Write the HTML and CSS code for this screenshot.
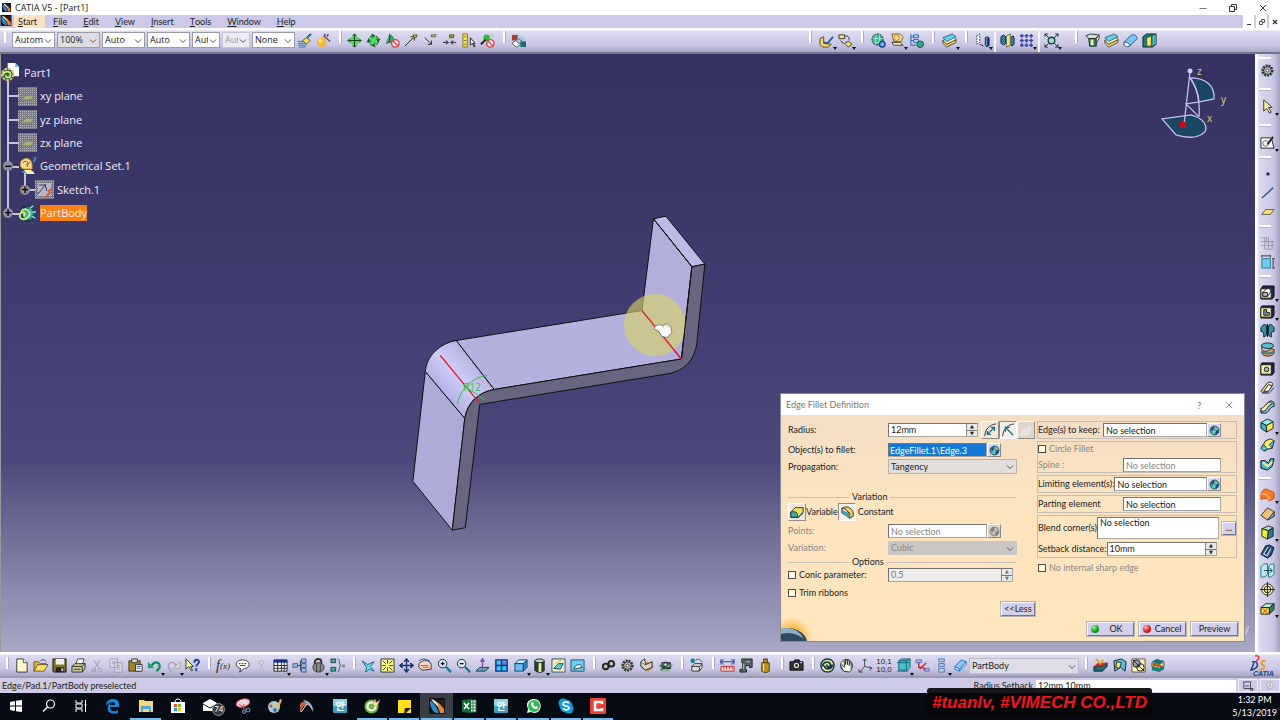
FILE: index.html
```html
<!DOCTYPE html>
<html lang="en">
<head>
<meta charset="utf-8">
<title>CATIA V5 - [Part1]</title>
<link rel="stylesheet" href="styles.css">
</head>
<body>
<svg class="defs" aria-hidden="true">
<symbol id="chev" viewBox="0 0 8 8"><path d="M1 2.5l3 3 3-3" fill="none" stroke="#555"/></symbol>
<symbol id="catia" viewBox="0 0 16 16"><rect width="16" height="16" fill="#12121a"/><path d="M1 3c2 0 6 3 9 12H7C3 13 1 9 1 3z" fill="#2d87c4"/><path d="M2 1c4 1 9 4 13 10v4h-4C9 8 6 4 2 1z" fill="#e98435"/><path d="M2 1c4 1 6 4 8 8-3-2-6-5-8-8z" fill="#e8f6ff"/><path d="M9 2h6v8c-1-3-3-6-6-8z" fill="#33231c"/></symbol>
<symbol id="gear" viewBox="0 0 16 16"><path d="M1 5l9-3 5 8-8 5-6-2z" fill="#9fd0b9"/><circle cx="8" cy="8" r="5" fill="none" stroke="#333" stroke-width="3" stroke-dasharray="2 1"/><circle cx="8" cy="8" r="4" fill="#ccc" stroke="#333"/><circle cx="8" cy="8" r="1.7" fill="#fff" stroke="#333"/></symbol>
<symbol id="globe" viewBox="0 0 16 16"><circle cx="8" cy="8" r="6.5" fill="#3ab7a7" stroke="#124" /><path d="M3 5l4-3 3 2-3 4-3 1zM9 9l4-2 1 4-4 3z" fill="#1b47a8"/><path d="M6 10l3-7 3 4M5 13l5-4" stroke="#d9ef82" fill="none"/></symbol>
<symbol id="slab" viewBox="0 0 16 16"><path d="M1 11l4 4 10-5v-3L5 12 1 8z" fill="#f8dc61" stroke="#222" stroke-width=".8"/><path d="M1 8l4 4 10-5-4-4z" fill="#fff3b5" stroke="#333" stroke-width=".8"/><path d="M1 5l4 4 10-5-4-3z" fill="#5ed6ee" stroke="#246" stroke-width=".8"/></symbol>
<symbol id="bluebox" viewBox="0 0 16 16"><path d="M2 6l4-4h9l-4 4z" fill="#bdeaff" stroke="#147"/><path d="M2 6h9v8H2z" fill="#68bdf0" stroke="#147"/><path d="M11 6l4-4v8l-4 4z" fill="#2b86cc" stroke="#147"/></symbol>
<symbol id="erase" viewBox="0 0 16 16"><path d="M2 9L9 2l5 2-7 8z" fill="#8cc7f5" stroke="#236bc0"/><path d="M2 9v3l5 2v-2zM7 14l7-7V4l-7 8z" fill="#d9ecff" stroke="#236bc0"/></symbol>
<symbol id="no" viewBox="0 0 16 16"><circle cx="11" cy="11" r="4" fill="#fff" fill-opacity=".7" stroke="#e2383c" stroke-width="1.4"/><path d="M8 8l6 6" stroke="#e2383c" stroke-width="1.4"/></symbol>
<symbol id="plane" viewBox="0 0 19 19"><rect width="19" height="19" fill="#7c7b89"/><path d="M0 1.500h19M0 3.500h19M0 5.500h19M0 7.500h19M0 9.500h19M0 11.500h19M0 13.500h19M0 15.500h19M0 17.500h19" stroke="#aeaeb6" stroke-dasharray="1 1"/><path d="M2 13l6-5h9l-4 5z" fill="#b3a87c" stroke="#6b7470"/></symbol>
<symbol id="part" viewBox="0 0 20 20"><circle cx="10" cy="10" r="7" fill="#2d9c8c" stroke="#112b2b" stroke-width="3" stroke-dasharray="3 1"/><circle cx="11" cy="10" r="7" fill="#46b3aa" stroke="#153d4c"/><path d="M12 3c5 2 6 10 1 14M9 4c4 3 4 10 0 13" fill="none" stroke="#17566b" stroke-width="1.500"/><path d="M3 8c3-4 8-3 9 1s-3 8-7 7-4-6-1-7 4 2 2 4" fill="none" stroke="#d9f078" stroke-width="1.800"/><path d="M13 4l3-2M15 9l4-1M15 13l3 2" stroke="#93e5dc" stroke-width="1.500"/></symbol>
<symbol id="han" viewBox="0 0 16 16"><rect x="1" y="1" width="14" height="14" rx="1" fill="#3b9fbd"/><rect x="1" y="1" width="14" height="7" fill="#8cd0df"/><text x="8" y="12" text-anchor="middle">안</text></symbol>
<symbol id="fillet" viewBox="0 0 16 16"><path d="M1 8l5-5h9v5l-5 6H1z" fill="#efe25c" stroke="#222"/><path d="M1 8c5-1 8 0 8 6H1z" fill="#44b0a4" stroke="#222"/><path d="M9 14l6-7v3l-5 4z" fill="#2b6d75"/></symbol>
<symbol id="pad" viewBox="0 0 16 16"><path d="M3 1h12v11l-2 3H1V4z" fill="#13265b" stroke="#111"/><path d="M1 4h11v10H1z" fill="#f7f1b0" stroke="#222"/><path d="M3 8l4-4h4v4l-3 4H3z" fill="#fff" stroke="#222"/><path d="M3 8h5v4H3z" fill="#b6b7d8" stroke="#222"/></symbol>
<symbol id="rib" viewBox="0 0 16 16"><path d="M1 11c4 1 5-8 11-9l3 2v4c-5 0-6 8-10 7H1z" fill="#70c6de" stroke="#112"/><path d="M1 10c4 0 5-6 10-7l2 2C8 6 8 12 4 13H1z" fill="#f7f0a1" stroke="#222"/></symbol>
<symbol id="page" viewBox="0 0 16 16"><path d="M3 1h7l4 4v10H3z" fill="#fff9c9" stroke="#333"/><path d="M10 1v4h4" fill="#fff" stroke="#555"/></symbol>
</svg>

<div class="app">
<header class="titlebar">
  <svg class="logo"><use href="#catia"/></svg><h1>CATIA V5 - [Part1]</h1>
  <div class="winctl">
    <button aria-label="Minimize"><svg viewBox="0 0 10 10"><path d="M1.500 5.500h7" stroke="#777" fill="none"/></svg></button>
    <button aria-label="Restore"><svg viewBox="0 0 10 10"><path d="M1.500 3.500h5v5h-5zM3.500 3.500v-2h5v5h-2" stroke="#333" fill="none"/></svg></button>
    <button aria-label="Close"><svg viewBox="0 0 10 10"><path d="M2 2l6 6M8 2l-6 6" stroke="#333" fill="none"/></svg></button>
  </div>
</header>

<nav class="menubar">
  <svg class="logo"><use href="#catia"/></svg>
  <button class="on"><u>S</u>tart</button><button><u>F</u>ile</button><button><u>E</u>dit</button><button><u>V</u>iew</button><button><u>I</u>nsert</button><button><u>T</u>ools</button><button><u>W</u>indow</button><button><u>H</u>elp</button>
  <div class="docctl">
    <button aria-label="Minimize document"><svg viewBox="0 0 10 10"><path d="M3 7.500h4" stroke="#333"/></svg></button>
    <button aria-label="Restore document"><svg viewBox="0 0 10 10"><path d="M2.500 4.500h3v3h-3zM4.500 4V2.500h3v3H6" stroke="#555" fill="none"/></svg></button>
    <button aria-label="Close document"><svg viewBox="0 0 10 10"><path d="M3 3l4 4M7 3l-4 4" stroke="#333" stroke-width="1.300"/></svg></button>
  </div>
</nav>

<div class="bar top">
  <div class="set lead"><i class="sep"></i></div>
  <div class="combos">
    <span class="sel w42"><select aria-label="Fill color"><option>Automatic</option></select><svg><use href="#chev"/></svg></span>
    <span class="sel w42 gray"><select aria-label="Transparency"><option>100%</option></select><svg><use href="#chev"/></svg></span>
    <span class="sel w42"><select aria-label="Line thickness"><option>Auto</option></select><svg><use href="#chev"/></svg></span>
    <span class="sel w42"><select aria-label="Line type"><option>Auto</option></select><svg><use href="#chev"/></svg></span>
    <span class="sel w28"><select aria-label="Point symbol"><option>Auto</option></select><svg><use href="#chev"/></svg></span>
    <span class="sel w28 off"><select aria-label="Rendering" disabled><option>Auto</option></select><svg><use href="#chev"/></svg></span>
    <span class="sel w42"><select aria-label="Layer"><option>None</option></select><svg><use href="#chev"/></svg></span>
  </div>
  <div class="set">
    <button aria-label="Painter"><svg viewBox="0 0 16 16"><path d="M1 9h9M1 11h8M1 13h9M2 15h7" stroke="#2979b8"/><path d="M6 8l4-3 4 3-4 4z" fill="#f0e05a" stroke="#554"/><path d="M11 5l4-4" stroke="#168" stroke-width="2"/></svg></button>
    <button aria-label="Wizard"><svg viewBox="0 0 16 16"><circle cx="6" cy="10" r="5" fill="#f2b92e"/><circle cx="4.500" cy="8.500" r="2" fill="#ffe88a"/><path d="M8 3l7 6M9 1l1 2M13 1l-1 3" stroke="#444b87" stroke-width="1.500"/><path d="M8 3l3 3" stroke="#e23"/></svg></button>
    <i class="sep"></i>
    <button aria-label="Snap"><svg viewBox="0 0 16 16"><path d="M8 1l7 7-7 7-7-7z" fill="#53d66c"/><path d="M8 1v14M1 8h14M6 3l2-2 2 2M6 13l2 2 2-2M3 6L1 8l2 2M13 6l2 2-2 2" fill="none" stroke="#143c1b"/></svg></button>
    <button aria-label="Rotate snap"><svg viewBox="0 0 16 16"><circle cx="8" cy="8" r="5.500" fill="#53d66c" stroke="#143c1b" stroke-dasharray="5 2"/><path d="M6 1l3 2-3 2M15 6l-2 3-2-3M10 15l-3-2 3-2M1 10l2-3 2 3" fill="none" stroke="#143c1b"/></svg></button>
    <button aria-label="Reset compass"><svg viewBox="0 0 16 16"><path d="M5 1c4 2 5 4 5 8l-9 1z" fill="#36a568"/><path d="M5 1v8M1 11l8-2" stroke="#243"/><use href="#no" width="16" height="16"/></svg></button>
    <button aria-label="Move to"><svg viewBox="0 0 16 16"><path d="M1 14l9-9M7 4l4 0v4" fill="none" stroke="#222"/><path d="M10 2h4l-1 3h-3z" fill="#b9b030" stroke="#553"/></svg></button>
    <button aria-label="Move from"><svg viewBox="0 0 16 16"><path d="M2 5l7 7M9 8v4H5" fill="none" stroke="#222"/><path d="M9 2h5l-1 2H9z" fill="#e9e378" stroke="#553"/></svg></button>
    <button aria-label="Align"><svg viewBox="0 0 16 16"><path d="M1 10h5M15 10h-5M4 8l3 2-3 2M12 8l-3 2 3 2" fill="none" stroke="#222"/><path d="M8 2h5l-1 3H8z" fill="#a59b20" stroke="#553"/></svg></button>
    <button aria-label="Select rule"><svg viewBox="0 0 16 16"><path d="M2 1h5v14H2z" fill="#f3e540" stroke="#887b11"/><path d="M3 4h3M3 8h3M3 12h3" stroke="#776"/><path d="M10 5v8l2-2 2 4 1-1-2-3h2z" fill="#fff" stroke="#222"/></svg></button>
    <button aria-label="Delete snap"><svg viewBox="0 0 16 16"><circle cx="7" cy="5" r="3.500" fill="#29bd3b"/><path d="M1 12l5-5" stroke="#222" stroke-width="2"/><path d="M10 2h5M11 4h4" stroke="#b5c5b5"/><use href="#no" width="16" height="16"/></svg></button>
    <i class="sep"></i>
    <button aria-label="Catalog"><svg viewBox="0 0 16 16"><path d="M6 1l9 4v9H6z" fill="#a5cce8"/><path d="M1 2h6v6H1z" fill="#9c3e36"/><path d="M10 9h6v6h-6z" fill="#1d6b70"/><path d="M1 11l4-3 5 4-4 3zM8 6l4 3" fill="#fff" stroke="#555"/></svg></button>
  </div>
  <div class="set right">
    <i class="sep"></i>
    <button class="dd" aria-label="Paste special"><svg viewBox="0 0 16 16"><path d="M1 6l4-2v7l8 1-3 3H4l-3-3z" fill="#f5d95a" stroke="#543"/><path d="M5 10l4 1 6-7" fill="none" stroke="#2d53a4" stroke-width="2"/></svg></button>
    <button class="dd" aria-label="Instantiate"><svg viewBox="0 0 16 16"><path d="M1 2h6v4H1zM7 11l4-2 4 3-4 3z" fill="#f6e66a" stroke="#333"/><path d="M7 4c3-2 5 0 5 4M3 8l3 4" fill="none" stroke="#235"/></svg></button>
    <i class="sep"></i>
    <button aria-label="Part"><svg viewBox="0 0 16 16"><circle cx="7" cy="7" r="6" fill="#3fb59a" stroke="#123" stroke-dasharray="2 1"/><path d="M2 6h10M3 10h8M5 2v10M9 2v10" stroke="#a7ebc9"/><circle cx="12" cy="12" r="3" fill="#77b6e6" stroke="#1b3f94" stroke-width="1.500"/></svg></button>
    <button class="dd" aria-label="Bodies"><svg viewBox="0 0 16 16"><path d="M2 1h9l3 3-2 5H4z" fill="#f8d98d" stroke="#765"/><circle cx="7" cy="5" r="3" fill="none" stroke="#c68320"/><path d="M2 10h9l3 3H4z" fill="#fff3a6" stroke="#333"/></svg></button>
    <button aria-label="Tree"><svg viewBox="0 0 16 16"><path d="M2 1v12h6M2 4h5M2 8h5" fill="none" stroke="#285eb0"/><path d="M5 2h5v3H5zM5 7h5v3H5z" fill="#bfe2f6" stroke="#285eb0"/><circle cx="12" cy="12" r="3.500" fill="#30a990" stroke="#153"/></svg></button>
    <i class="sep"></i>
    <button class="dd" aria-label="Surfaces"><svg><use href="#slab"/></svg></button>
    <i class="sep"></i>
    <button class="dd" aria-label="Translate"><svg viewBox="0 0 16 16"><path d="M2 3l3-2v9l-3 2z" fill="#fff" stroke="#345" stroke-dasharray="2 1"/><path d="M5 12l4 2" stroke="#222"/><path d="M11 5l2-1 2 1v8l-2 2-2-2z" fill="#6797cf" stroke="#123"/><path d="M13 6v9l2-2V5z" fill="#122c66"/></svg></button>
    <i class="rule"></i>
    <button aria-label="Mirror"><svg viewBox="0 0 16 16"><path d="M1 4l3-2 2 2v7l-2 2-3-2zM11 5l3-2 1 2v7l-2 2-2-2z" fill="#317ea4" stroke="#123"/><path d="M7 3l4-2v12l-4 2z" fill="#f3ea68" stroke="#665"/></svg></button>
    <button class="dd" aria-label="Pattern"><svg viewBox="0 0 16 16"><path d="M3 1v14M8 1v14M13 1v14M1 3h14M1 8h14M1 13h14" stroke="#3643a4" stroke-width="1.500" stroke-dasharray="4 1"/></svg></button>
    <i class="rule"></i>
    <button class="dd" aria-label="Scale"><svg viewBox="0 0 16 16"><path d="M1 1l4 4M15 1l-4 4M1 15l4-4M15 15l-4-4M1 4V1h3M12 1h3v3M1 12v3h3M12 15h3v-3" fill="none" stroke="#222"/><circle cx="8" cy="8" r="3.500" fill="#aed8c9" stroke="#174b43" stroke-width="1.500"/></svg></button>
    <i class="blank"></i><i class="sep"></i>
    <button aria-label="Assemble"><svg viewBox="0 0 16 16"><path d="M1 3l5-2 9 1-4 4H4z" fill="#c4e4d9" stroke="#333"/><path d="M4 6h8v8H5z" fill="#27877c" stroke="#222"/><path d="M6 7h3v6H6z" fill="#eef0a0"/><path d="M12 6l3-4v4l-3 5z" fill="#f8eb9b" stroke="#333"/></svg></button>
    <button aria-label="Add"><svg><use href="#slab"/></svg></button>
    <button aria-label="Remove"><svg viewBox="0 0 16 16"><path d="M1 10l8-8c3-1 6 1 6 4l-8 8z" fill="#7cc6f3" stroke="#24549b"/><path d="M1 10c3-1 6 1 6 4l-3 1-3-2z" fill="#fff5ce" stroke="#24549b"/></svg></button>
    <button aria-label="Intersect"><svg viewBox="0 0 16 16"><path d="M1 4l4-3h10v11l-4 3H1z" fill="#147f7d" stroke="#122"/><path d="M5 5l5-2v11H5z" fill="#f6e95f" stroke="#444"/><path d="M12 3v10M14 2v10" stroke="#8be0d1"/></svg></button>
  </div>
</div>

<main class="work">
<section class="viewport">
  <svg class="scene" viewBox="1 53 1254 599" preserveAspectRatio="xMidYMin meet" role="img" aria-label="Part geometry">
    <defs><linearGradient id="bend" x1="0" y1="1" x2="1" y2="0"><stop offset=".3" stop-color="#b5b1e3"/><stop offset=".5" stop-color="#ceccfa"/><stop offset=".75" stop-color="#b5b1df"/></linearGradient></defs>
    <g stroke="#111" stroke-linejoin="round">
      <path d="M425 371l39.500 47L452 530l-39.500-49z" fill="#aeabd8"/>
      <path d="M456 340l38 49c-16 3-27 13-29.500 29L425 371c1-15 14-28 31-31z" fill="url(#bend)"/>
      <path d="M456 340l186-30 39.500 48.500L494 389z" fill="#b4b1df"/>
      <path d="M653.500 218L692 266l-10.500 92.500L642 310z" fill="#b2afdd"/>
      <path d="M653.500 218l12.500-2.500 39 48-13 2.500z" fill="#bdbae7"/>
      <path d="M692 266l13-2.500-8 78.500c-2 18-13 29-30 31.500L479.500 404 465 527.500 452 530l12.500-112c3-16 13.500-26 29.500-29l187.500-30.500z" fill="#67657f"/>
    </g>
    <circle cx="655" cy="324.500" r="31" fill="#d8d463" opacity=".62"/>
    <path d="M653.500 218L692 266l-10.500 92.500" fill="none" stroke="#111"/>
    <path d="M642 310l39.500 48.500M440 355l39.500 48" stroke="#e31b2d" stroke-width="1.300"/>
    <path d="M457 404c3-15 14-27 30-29M463 385l21 14" fill="none" stroke="#31c052"/>
    <text x="463" y="391" class="dim">R12</text>
    <path d="M655 326l4-2 4 1 4-2 4 4 1 5-5 5-5-1-3-5-5-3z" fill="#fff" stroke="#444" stroke-width=".6"/>
    <path d="M662 325l3 3M665 324l3 3" stroke="#777" stroke-width=".6"/>
    <g fill="#1b4661" stroke="#c5bdf2" stroke-width="1.300">
      <path d="M1163 118l29-4c17 5 21 18 4 22-7 1-13 0-19-2z"/>
      <path d="M1191 77c16 0 25 8 24 21l-15 3c-1-9-4-17-9-24z"/>
      <path d="M1200 101l-13 2 13 13M1191 77c8 11 10 24 9 39M1191 70l-6 54" fill="none"/>
    </g>
    <circle cx="1191" cy="70" r="2.500" fill="#d7cffa"/><rect x="1181" y="121" width="6" height="6" fill="#d20b13"/>
    <g class="axis"><text x="1198" y="74">z</text><text x="1222" y="102">y</text><text x="1208" y="121">x</text></g>
    <text x="1245" y="632" class="axis pale">y</text>
  </svg>

  <ul class="tree">
    <li class="root"><svg viewBox="0 0 20 20"><path d="M7 0h8l4 4v10H7z" fill="#fff"/><path d="M15 0v4h4" fill="#5ab6e0"/><circle cx="7" cy="12" r="6" fill="#315f44" stroke="#d7c983" stroke-width="2" stroke-dasharray="3 1"/><path d="M2 13c1-5 8-5 8-1s-5 4-5 1" fill="none" stroke="#cdeb76" stroke-width="2"/></svg><span>Part1</span></li>
    <li class="leaf"><svg><use href="#plane"/></svg><span>xy plane</span></li>
    <li class="leaf"><svg><use href="#plane"/></svg><span>yz plane</span></li>
    <li class="leaf"><svg><use href="#plane"/></svg><span>zx plane</span></li>
    <li class="leaf"><b class="ball">−</b><svg viewBox="0 0 19 19"><path d="M3 4c5-5 11-2 11 4v4H6c-4-1-4-4-3-8z" fill="#f5d98c" stroke="#c99337"/><path d="M5 6c3-4 7 0 4 4M8 8l4-3" stroke="#8a5a23" fill="none"/><path d="M15 5c4-3 2-5 1-4M4 15h12" stroke="#3e8bc2" stroke-width="2" fill="none"/><path d="M6 13h7l4 4H9z" fill="#fff5ae"/></svg><span>Geometrical Set.1</span></li>
    <li class="leaf sub"><b class="ball">+</b><svg viewBox="0 0 19 19"><use href="#plane" width="19" height="19"/><rect x="3" y="3" width="13" height="13" fill="#b9b7c6"/><path d="M3 14l8-10M4 5h6l2 6" fill="none" stroke="#35366a"/><path d="M12 18c-2-4 5-4 2-7l3-2" fill="none" stroke="#d5553a" stroke-width="2"/></svg><span>Sketch.1</span></li>
    <li class="leaf"><b class="ball">+</b><svg><use href="#part"/></svg><span class="picked">PartBody</span></li>
  </ul>

  <form class="dialog" onsubmit="return false">
    <div class="dtitle"><h2>Edge Fillet Definition</h2><button type="button" aria-label="Help">?</button><button type="button" aria-label="Close"><svg viewBox="0 0 10 10"><path d="M1 1l8 8M9 1l-8 8" stroke="#777" fill="none"/></svg></button></div>
    <div class="dbody">
      <div class="dleft">
        <div class="row r18"><label for="rad">Radius:</label>
          <span class="spin w89"><input id="rad" value="12mm"><span class="ud"><button type="button" aria-label="Radius up">▲</button><button type="button" aria-label="Radius down">▼</button></span></span>
          <span class="modes">
          <button type="button" class="tool" aria-label="Chordal"><svg viewBox="0 0 16 16"><path d="M2 15C2 8 7 2 15 1" stroke="#222" fill="none"/><path d="M5 13l8-8M5 9v4h4M9 5h4v4" fill="none" stroke="#126b87" stroke-width="1.500"/></svg></button><button type="button" class="tool down" aria-label="Radius mode"><svg viewBox="0 0 16 16"><path d="M2 15C2 8 7 2 15 1" stroke="#222" fill="none"/><path d="M5 5l9 9M5 10V5h5" fill="none" stroke="#126b87" stroke-width="1.500"/></svg></button><button type="button" class="tool faded" aria-label="Variable mode" disabled><svg viewBox="0 0 16 16"><path d="M2 14c0-7 5-7 5-4 2-6 6-8 7-4l-5 8z" fill="#eee8df" stroke="#fffaf0"/></svg></button></span>
        </div>
        <div class="row r14 g4"><label for="obj">Object(s) to fillet:</label><input id="obj" class="field picked-field" value="EdgeFillet.1\Edge.3"><button type="button" class="mini" aria-label="Edit objects"><svg><use href="#globe"/></svg></button></div>
        <div class="row r15 g2"><label for="prop">Propagation:</label><span class="sel wide"><select id="prop"><option>Tangency</option></select><svg><use href="#chev"/></svg></span></div>
        <div class="divider first">Variation</div>
        <div class="row r18"><button type="button" class="tool" aria-label="Variable"><svg><use href="#fillet"/></svg></button><span>Variable</span><button type="button" class="tool down" aria-label="Constant"><svg viewBox="0 0 16 16"><path d="M2 4c5-4 11-1 13 4v5l-4 2V9z" fill="#f4cd63" stroke="#222"/><path d="M2 4c5 0 8 3 9 11L2 9z" fill="#fff3d2" stroke="#222"/><path d="M2 5l9 5v5L2 10z" fill="#469eaf"/></svg></button><span class="after">Constant</span></div>
        <div class="row r14 g3 dim-row"><label for="pts">Points:</label><input id="pts" class="field" value="No selection"><button type="button" class="mini faded" aria-label="Edit points"><svg><use href="#globe"/></svg></button></div>
        <div class="row r14 g3 dim-row"><label for="var">Variation:</label><span class="sel wide dark"><select id="var"><option>Cubic</option></select><svg><use href="#chev"/></svg></span></div>
        <div class="divider">Options</div>
        <div class="row r14"><label class="check"><input type="checkbox">Conic parameter:</label><span class="spin w125 dis"><input aria-label="Conic value" value="0.5"><span class="ud"><button type="button" aria-label="Conic up">▲</button><button type="button" aria-label="Conic down">▼</button></span></span></div>
        <div class="row r14 g4"><label class="check"><input type="checkbox">Trim ribbons</label></div>
        <div class="row r14 g2 end"><button type="button" class="push less">&lt;&lt;Less</button></div>
      </div>
      <div class="dright">
        <div class="box"><div class="row r14"><label for="keep">Edge(s) to keep:</label><input id="keep" class="field push-right w104" value="No selection"><button type="button" class="mini" aria-label="Edit edges"><svg><use href="#globe"/></svg></button></div></div>
        <div class="box tight dim-row"><div class="row r14"><label class="check"><input type="checkbox">Circle Fillet</label></div><div class="row r14 g2"><label for="spine">Spine :</label><input id="spine" class="field push-right w98 flush" value="No selection"></div></div>
        <div class="box"><div class="row r14"><label for="lim">Limiting element(s):</label><input id="lim" class="field push-right w98" value="No selection"><button type="button" class="mini" aria-label="Edit limits"><svg><use href="#globe"/></svg></button></div></div>
        <div class="box"><div class="row r14"><label for="parting">Parting element</label><input id="parting" class="field push-right w98 flush" value="No selection"></div></div>
        <div class="box"><div class="row r22"><label for="blend">Blend corner(s)</label><textarea id="blend" class="push-right">No selection</textarea><button type="button" class="push dots">...</button></div><div class="row r14 g3"><label for="setb">Setback distance:</label><span class="spin w115 push-right gap20"><input id="setb" value="10mm"><span class="ud"><button type="button" aria-label="Setback up">▲</button><button type="button" aria-label="Setback down">▼</button></span></span></div></div>
        <div class="row r14 nosharp"><label class="check"><input type="checkbox">No internal sharp edge</label></div>
      </div>
    </div>
    <div class="dfoot">
      <svg class="glow" viewBox="0 0 40 28" aria-hidden="true"><defs><radialGradient id="gl"><stop offset=".4" stop-color="#ffb640"/><stop offset="1" stop-color="#ffb640" stop-opacity="0"/></radialGradient></defs><circle cx="11" cy="24" r="20" fill="url(#gl)"/><ellipse cx="7" cy="30" rx="19" ry="15" fill="#2f4a60"/><path d="M0 16c9-3 18 1 23 10-8-6-15-7-23-5z" fill="#8fb0c4"/></svg>
      <button type="button" class="push"><i class="led green"></i><span>OK</span></button><button type="button" class="push"><i class="led red"></i><span>Cancel</span></button><button type="button" class="push">Preview</button>
    </div>
  </form>
</section>

<aside class="side">
  <i class="sep"></i><button aria-label="Workbench"><svg><use href="#gear"/></svg></button>
  <i class="sep tall"></i><button class="dd" aria-label="Select"><svg viewBox="0 0 16 16"><path d="M4 1v12l3-3 3 5 2-1-3-5h4z" fill="#fbf5a2" stroke="#333"/></svg></button>
  <i class="sep tall"></i><button class="dd" aria-label="Sketch"><svg viewBox="0 0 16 16"><path d="M1 3h11l3 11H1z" fill="#fff" stroke="#222"/><circle cx="6" cy="9" r="3" fill="none" stroke="#247a6d"/><path d="M8 10l6-8" stroke="#222" stroke-width="2"/></svg></button>
  <i class="sep"></i><button aria-label="Point"><svg viewBox="0 0 16 16"><path d="M7 7h3v3H7z" fill="#124"/></svg></button>
  <button aria-label="Line"><svg viewBox="0 0 16 16"><path d="M2 14L14 3" stroke="#124678" stroke-width="1.300"/></svg></button>
  <button aria-label="Plane"><svg viewBox="0 0 16 16"><path d="M2 11l4-5h9l-4 5z" fill="#ffe878" stroke="#554"/></svg></button>
  <i class="sep"></i><button aria-label="Constraint dialog"><svg viewBox="0 0 16 16"><path d="M1 3h6v4h8M1 7h12v8H5V3M1 11h14M9 2v12" fill="none" stroke="#9999a8"/></svg></button>
  <button aria-label="Constraint"><svg viewBox="0 0 16 16"><path d="M2 5h9v10H2z" fill="#70cce8" stroke="#27769a"/><path d="M2 1v3M11 1v3M2 2h9M13 5h3M13 15h3M14 5v10" stroke="#333"/></svg></button>
  <i class="sep"></i><button class="dd" aria-label="Pad"><svg><use href="#pad"/></svg></button>
  <button class="dd" aria-label="Pocket"><svg viewBox="0 0 16 16"><path d="M2 2h13v10l-2 3H1V4z" fill="#13265b" stroke="#111"/><path d="M1 4h11v10H1z" fill="#f7f1a0" stroke="#222"/><path d="M4 6h3v3h3v3H4z" fill="#6d8ab1" stroke="#222"/></svg></button>
  <button aria-label="Shaft"><svg viewBox="0 0 16 16"><path d="M1 5c2-4 5-4 6-2v10l-3 2c0-4 0-6-3-6zM15 5c-2-4-5-4-6-2v10l3 2c0-4 0-6 3-6z" fill="#368ea8" stroke="#122"/><path d="M8 1v14" stroke="#111"/></svg></button>
  <button aria-label="Groove"><svg viewBox="0 0 16 16"><ellipse cx="8" cy="4" rx="6.500" ry="3" fill="#4ec0ca" stroke="#222"/><path d="M2 4v4c2 3 8 2 9-1l4 1v4c-3 4-11 4-13 0v-2" fill="#ef995c" stroke="#222"/><path d="M2 10c3 3 9 3 13 0" fill="none" stroke="#23828d" stroke-width="2"/></svg></button>
  <button aria-label="Hole"><svg viewBox="0 0 16 16"><path d="M2 2h13v10l-2 3H1V4z" fill="#13265b" stroke="#111"/><path d="M1 4h11v10H1z" fill="#f7f1a0" stroke="#222"/><circle cx="7" cy="9" r="2.500" fill="#8fb6ce" stroke="#222"/></svg></button>
  <button aria-label="Rib"><svg viewBox="0 0 16 16"><path d="M1 12l7-9c3-2 7 0 5 3l-5 7H2z" fill="#f6e98c" stroke="#222"/><path d="M4 12l5-7 4 1-4 6z" fill="#fff" stroke="#222"/><path d="M2 14h8l5-6" fill="none" stroke="#345"/></svg></button>
  <button aria-label="Slot"><svg><use href="#rib"/></svg></button>
  <button class="dd" aria-label="Solid combine"><svg viewBox="0 0 16 16"><path d="M1 5l7-4 6 3-7 4z" fill="#91edf0" stroke="#222"/><path d="M1 5l6 3v7l-6-4z" fill="#38b4b8" stroke="#222"/><path d="M7 8l7-4v7l-7 4z" fill="#ecea55" stroke="#222"/></svg></button>
  <button aria-label="Loft"><svg viewBox="0 0 16 16"><path d="M1 12l5-8 5-2 4 2-2 8-5 1-3 2z" fill="#f6ee62" stroke="#222"/><path d="M1 12l3-4 4 5-4 2zM10 8l5-4-2 8z" fill="#64c1dc" stroke="#145"/></svg></button>
  <button aria-label="Removed loft"><svg viewBox="0 0 16 16"><path d="M1 5h5l3 3 2-5h4l-2 8-5 4-7-2z" fill="#45b9c6" stroke="#112"/><path d="M3 7l5 4 5-5" fill="none" stroke="#f5f39a" stroke-width="2"/></svg></button>
  <i class="sep"></i><button class="dd" aria-label="Edge fillet"><svg viewBox="0 0 16 16"><path d="M1 8c1-5 5-7 8-5l6 3v6l-5 3-3-3-6 1z" fill="#f77d20" stroke="#b94b14"/><path d="M1 8c4-2 8 0 9 6" fill="none" stroke="#ffd199"/></svg></button>
  <button aria-label="Chamfer"><svg viewBox="0 0 16 16"><path d="M1 10l7-8 7 4v5l-7 4z" fill="#f0c17a" stroke="#333"/><path d="M8 15l7-9v5z" fill="#68b7d2" stroke="#333"/></svg></button>
  <button class="dd" aria-label="Draft"><svg viewBox="0 0 16 16"><path d="M2 4l7-3 5 2-5 3z" fill="#a9e5cb" stroke="#222"/><path d="M2 4l7 2-1 9-6-3z" fill="#f2ee2d" stroke="#222"/><path d="M9 6l5-3v9l-6 3z" fill="#247c97" stroke="#222"/></svg></button>
  <button aria-label="Shell"><svg viewBox="0 0 16 16"><path d="M1 11l5-9 4-1 5 3-3 8-4 3z" fill="#29568e" stroke="#111"/><path d="M3 11l5-8 4 2-4 8z" fill="#b6d3e8"/><path d="M6 11l4-7" stroke="#133" stroke-width="2"/></svg></button>
  <button aria-label="Thickness"><svg viewBox="0 0 16 16"><path d="M1 4l3-3h4v11l-3 3H1zM9 4l3-3h3v11l-3 3H9z" fill="#b9edf1" stroke="#277184"/><path d="M4 8h9M10 5l3 3-3 3" fill="none" stroke="#245"/></svg></button>
  <button aria-label="Thread"><svg viewBox="0 0 16 16"><circle cx="8" cy="8" r="6" fill="#fff7a5" stroke="#222"/><circle cx="8" cy="8" r="3.500" fill="none" stroke="#222"/><path d="M8 0v16M0 8h16" stroke="#222"/></svg></button>
  <button class="dd" aria-label="Remove face"><svg viewBox="0 0 16 16"><path d="M1 7l5-4h9l-5 4z" fill="#bff0e2" stroke="#222"/><path d="M1 7h9v7H1z" fill="#f5d544" stroke="#222"/><path d="M10 7l5-4v6l-5 5z" fill="#25875f" stroke="#222"/><path d="M3 8l5 5M8 8l-5 5" stroke="#db381b"/></svg></button>
</aside>
</main>

<div class="bar bottom">
  <div class="set">
    <i class="sep"></i>
    <button aria-label="New"><svg><use href="#page"/></svg></button>
    <button aria-label="Open"><svg viewBox="0 0 16 16"><path d="M1 14V4h5l2 2h6v3" fill="#e5b527" stroke="#654"/><path d="M1 14l4-7h11l-4 7z" fill="#ffe15b" stroke="#654"/><path d="M8 3c3-2 5-1 6 1" fill="none" stroke="#333"/></svg></button>
    <button aria-label="Save"><svg viewBox="0 0 16 16"><path d="M1 1h14v14H2l-1-1z" fill="#827623" stroke="#111"/><path d="M4 1h9v6H4z" fill="#eee"/><path d="M4 10h9v5H4z" fill="#222"/><path d="M10 11h2v3h-2z" fill="#ddd"/></svg></button>
    <button aria-label="Print"><svg viewBox="0 0 16 16"><path d="M5 7l2-6h7l-2 6z" fill="#fff" stroke="#444"/><path d="M1 9l3-3h11v5l-3 4H1z" fill="#c8cb8b" stroke="#333"/><path d="M1 9h11v6M3 12h7M12 9l3-3" fill="none" stroke="#333"/></svg></button>
    <button aria-label="Cut"><svg viewBox="0 0 16 16"><path d="M4 2l6 9M11 2L5 11" stroke="#9b9bab"/><circle cx="4" cy="13" r="2" fill="none" stroke="#9b9bab"/><circle cx="11" cy="13" r="2" fill="none" stroke="#9b9bab"/></svg></button>
    <button aria-label="Copy"><svg viewBox="0 0 16 16"><path d="M1 1h8v9H1zM6 5h8v10H6zM3 4h4M3 6h2M8 8h4M8 10h4M8 12h4" fill="#dddde9" stroke="#9b9bab"/></svg></button>
    <button aria-label="Paste"><svg viewBox="0 0 16 16"><path d="M1 3h12v11H1z" fill="#a38726" stroke="#332"/><path d="M4 1h6v4H4z" fill="#ddd" stroke="#333"/><path d="M8 7h7v7H8z" fill="#fff" stroke="#333"/><path d="M9 9h5M9 11h4" stroke="#36a"/></svg></button>
    <button class="dd" aria-label="Undo"><svg viewBox="0 0 16 16"><path d="M5 8c4-6 10-3 8 3l-3 3" fill="none" stroke="#138d61" stroke-width="2.500"/><path d="M1 4v7h7z" fill="#16a46b"/></svg></button>
    <button class="dd" aria-label="Redo"><svg viewBox="0 0 16 16"><path d="M11 8C7 2 1 5 3 11l3 3" fill="none" stroke="#a3a3b2" stroke-width="1.500"/><path d="M15 4v7H8z" fill="#ddd" stroke="#a3a3b2"/></svg></button>
    <button aria-label="What's this"><svg viewBox="0 0 16 16"><path d="M1 1v11l3-3 3 5 1-1-2-4h3z" fill="#fffa9e" stroke="#333"/><path d="M10 5c0-4 5-4 5-1 0 2-3 3-3 5M12 11v3" fill="none" stroke="#174394" stroke-width="2"/></svg></button>
    <i class="sep"></i>
    <button aria-label="Formula" class="fx">f<small>(x)</small></button>
    <button aria-label="Comment"><svg viewBox="0 0 16 16"><path d="M8 2c9 0 9 9 2 9l-5 4 1-4C-1 10 0 2 8 2z" fill="#fff" stroke="#333"/><path d="M4 6h2M7 6h2M10 6h2M5 8h6" stroke="#333"/></svg></button>
    <button aria-label="Link"><svg viewBox="0 0 16 16"><path d="M8 2l3 3-3 3-3-3zM8 8v3M8 11l2 2-2 2-2-2z" fill="#d5d5df" stroke="#aaaab8"/></svg></button>
    <button class="dd" aria-label="Design table"><svg viewBox="0 0 16 16"><path d="M1 2h14v12H1z" fill="#fff" stroke="#222"/><path d="M1 2h14v3H1z" fill="#172f93"/><path d="M1 8h14M1 11h14M5 2v12M9 2v12M12 2v12" stroke="#223"/></svg></button>
    <button aria-label="Relations"><svg viewBox="0 0 16 16"><path d="M5 8h4M9 3v10M9 3h3M9 13h3" fill="none" stroke="#333"/><path d="M1 6h5v4H1zM10 1h5v4h-5zM10 6h5v4h-5zM10 11h5v4h-5z" fill="#94bfd8" stroke="#4857a1"/></svg></button>
    <button class="dd" aria-label="Lock"><svg viewBox="0 0 16 16"><path d="M4 8V4c1-4 7-4 7 0v4" fill="none" stroke="#333" stroke-width="2"/><ellipse cx="8" cy="10" rx="6" ry="5" fill="#888783" stroke="#333"/><path d="M6 6v9M10 6v8" stroke="#444"/></svg></button>
    <button aria-label="Equivalent"><svg viewBox="0 0 16 16"><path d="M1 1h5v4H1zM1 10h5v4H1z" fill="#4ba795" stroke="#244"/><path d="M8 1c4 0 0 6 4 7-4 1 0 6-4 7" fill="none" stroke="#555"/><path d="M13 7h3v3h-3z" fill="#889"/></svg></button>
    <i class="sep"></i>
    <button aria-label="Fly"><svg viewBox="0 0 16 16"><path d="M1 3l6 4 7-3-4 5 4 5-5-2-4 3 1-5z" fill="#71d8ed" stroke="#17648e"/></svg></button>
    <button aria-label="Fit all"><svg viewBox="0 0 16 16"><path d="M1 1h14v14H1z" fill="#fff37b" stroke="#333"/><path d="M8 2v4M8 14v-4M2 8h4M14 8h-4M3 3l3 3M13 3l-3 3M3 13l3-3M13 13l-3-3" stroke="#174a44"/></svg></button>
    <button aria-label="Pan"><svg viewBox="0 0 16 16"><path d="M8 1v14M1 8h14M5.500 4L8 1l2.500 3M5.500 12L8 15l2.500-3M4 5.500L1 8l3 2.500M12 5.500L15 8l-3 2.500" fill="none" stroke="#16336e" stroke-width="1.500"/></svg></button>
    <button aria-label="Rotate"><svg viewBox="0 0 16 16"><path d="M1 6c5-5 12-4 13 1v5l-9 1-4-3z" fill="#ffd6c4" stroke="#333"/><path d="M3 8h8M5 10h7" stroke="#bf5742"/><path d="M1 3c4-3 9-2 12 1" fill="none" stroke="#2351a2"/></svg></button>
    <button aria-label="Zoom in"><svg viewBox="0 0 16 16"><circle cx="6" cy="6" r="4.500" fill="#d9f3ff" stroke="#222"/><path d="M9.500 9.500L15 15" stroke="#167899" stroke-width="2.500"/><path d="M4 6h4M6 4v4" stroke="#111" stroke-width="1.500"/></svg></button>
    <button aria-label="Zoom out"><svg viewBox="0 0 16 16"><circle cx="6" cy="6" r="4.500" fill="#d9f3ff" stroke="#222"/><path d="M9.500 9.500L15 15" stroke="#167899" stroke-width="2.500"/><path d="M4 6h4" stroke="#111" stroke-width="1.500"/></svg></button>
    <button aria-label="Normal view"><svg viewBox="0 0 16 16"><path d="M1 14l4-4h10l-4 4z" fill="#55adb8" stroke="#235"/><path d="M8 12V2M6 4l2-3 2 3" fill="none" stroke="#7452ae" stroke-width="1.500"/></svg></button>
    <button aria-label="Multi view"><svg viewBox="0 0 16 16"><path d="M2 2h12v12H2z" fill="#27d0ed" stroke="#1b2a91" stroke-width="1.500"/><path d="M8 3h5v5H8z" fill="#7d75dd"/><path d="M8 2v12M2 8h12" stroke="#1b2a91" stroke-width="1.500"/></svg></button>
    <button class="dd" aria-label="Isometric"><svg><use href="#bluebox"/></svg></button>
    <button class="dd" aria-label="Shading"><svg viewBox="0 0 16 16"><path d="M3 3v10c2 3 9 3 10 0V3z" fill="#28394b" stroke="#222"/><path d="M7 3h3v12H7z" fill="#f1ed78"/><ellipse cx="8" cy="3" rx="5" ry="2" fill="#b5dac7" stroke="#222"/></svg></button>
    <button aria-label="Hide show"><svg viewBox="0 0 16 16"><path d="M1 1h14v14H1z" fill="#eef0c7" stroke="#245c60"/><path d="M3 11l5-5h5l-3 6z" fill="#66cdd2" stroke="#245"/><path d="M5 6l6-4" stroke="#e4a72f"/></svg></button>
    <button aria-label="Swap visible"><svg viewBox="0 0 16 16"><path d="M1 2h14v12H1z" fill="#67d4ed" stroke="#32447c"/><path d="M4 12c1-5 8-7 9-2z" fill="#fff" stroke="#333"/></svg></button>
    <i class="sep"></i>
    <button aria-label="Kinematics"><svg viewBox="0 0 16 16"><path d="M1 6l12-4 3 6-11 6z" fill="#b9c9bf"/><circle cx="5" cy="9" r="3" fill="none" stroke="#222" stroke-width="2"/><circle cx="11" cy="6" r="3" fill="none" stroke="#222" stroke-width="2"/></svg></button>
    <button aria-label="Gear"><svg><use href="#gear"/></svg></button>
    <button aria-label="Box tool"><svg viewBox="0 0 16 16"><path d="M1 8l8-4 7 5-6 6z" fill="#e09552"/><path d="M2 4l5 3 7-3v6l-7 3-5-4z" fill="#d5cec2" stroke="#222"/><path d="M2 4l4-3 1 6" fill="#eee" stroke="#222"/></svg></button>
    <button aria-label="Assembly tool"><svg viewBox="0 0 16 16"><path d="M1 8l7-5 8 4-4 8-9-1z" fill="#83bba0"/><path d="M2 8l12 3M3 13l10-8M4 5h9v6H5z" fill="none" stroke="#222"/><circle cx="8" cy="7" r="2" fill="#ddd" stroke="#222"/></svg></button>
    <i class="sep"></i>
    <button aria-label="Update part"><svg viewBox="0 0 16 16"><path d="M3 9l3-3h8v4l-3 4H3zM3 9h8v5M11 9l3-3" fill="#ddd" stroke="#333"/><circle cx="4" cy="3" r="2.500" fill="#17809a"/><path d="M7 2c4-2 6 0 7 3" fill="none" stroke="#238" stroke-dasharray="2 1"/></svg></button>
    <i class="sep"></i>
    <button aria-label="Measure between"><svg viewBox="0 0 16 16"><path d="M1 4h14M4 1L1 4l3 3M12 1l3 3-3 3M1 1v6M15 1v6" fill="none" stroke="#1e3d9b"/><path d="M1 9h14v5H1z" fill="#ffd8d6" stroke="#b3332e"/><path d="M4 9v3M7 9v3M10 9v3M13 9v3" stroke="#b3332e"/></svg></button>
    <button aria-label="Measure item"><svg viewBox="0 0 16 16"><path d="M3 1h11v9h-3V8H8l-2 3 2 1v3H1v-3h3V5H3z" fill="#526563" stroke="#222"/><path d="M8 4h4M5 6v6" stroke="#bcc"/></svg></button>
    <button aria-label="Inertia"><svg viewBox="0 0 16 16"><path d="M6 5V1h4v4M4 5h8v9c-2 2-6 2-8 0z" fill="#b98e25" stroke="#493c18"/><path d="M6 6v8" stroke="#f1d572" stroke-width="1.500"/></svg></button>
    <i class="sep"></i>
    <button aria-label="Capture"><svg viewBox="0 0 16 16"><path d="M1 4h4l1-2h5l1 2h3v9H1z" fill="#333" stroke="#111"/><circle cx="8" cy="8" r="3.500" fill="#ddd" stroke="#111"/><circle cx="8" cy="8" r="1.500" fill="#333"/><path d="M12 5h2" stroke="#fff"/></svg></button>
    <i class="sep"></i>
    <button aria-label="Update all"><svg viewBox="0 0 16 16"><circle cx="8" cy="8" r="7" fill="#f5f39b" stroke="#123945" stroke-width="1.500"/><path d="M3 9c0-6 9-6 8-1-1 3-5 1-3-1M13 7c0 6-9 6-8 1" fill="none" stroke="#123945" stroke-width="2"/></svg></button>
    <button aria-label="Manual update"><svg viewBox="0 0 16 16"><circle cx="8" cy="8" r="6.500" fill="#eeedab" stroke="#246"/><path d="M5 14L2 8l1-1 3 3V3h1v4-5h2v5-4h2v5-3h2v8l-2 2z" fill="#fff" stroke="#333"/></svg></button>
    <button aria-label="Axis system"><svg viewBox="0 0 16 16"><path d="M7 1v8l8 2M7 9l-5 6M5 3l2-2 2 2M12 9l3 2-3 2M1 12v3h4" fill="none" stroke="#444"/></svg></button>
    <button aria-label="Mean dimensions" class="nums">10,1<br>10,0</button>
    <button class="dd" aria-label="Create datum"><svg viewBox="0 0 16 16"><path d="M3 3l3-2h9v9l-3 3H3z" fill="#44c4cd" stroke="#165e70"/><path d="M3 3h8v10M11 3l4-2M1 5h13M1 14h12" fill="none" stroke="#146b7b"/></svg></button>
    <button aria-label="Isolate"><svg viewBox="0 0 16 16"><path d="M1 2h6v3H1zM10 11h5v3h-5z" fill="#a9c4ef" stroke="#5a69b7"/><path d="M4 5v5h4l3 3M5 12l7-7" fill="none" stroke="#c2262e" stroke-width="1.500"/></svg></button>
    <button class="dd" aria-label="Stack"><svg viewBox="0 0 16 16"><path d="M5 1h6v3H5zM5 6h6v3H5zM5 11h6v4H5z" fill="#b9d0ee" stroke="#5372aa"/></svg></button>
    <button aria-label="Body"><svg><use href="#erase"/></svg></button>
  </div>
  <span class="sel body"><select aria-label="In work object"><option>PartBody</option></select><svg><use href="#chev"/></svg></span>
  <div class="set">
    <i class="sep"></i>
    <button aria-label="Material"><svg viewBox="0 0 16 16"><path d="M1 9h9l5-4v4l-5 5H1z" fill="#1b6c79" stroke="#122"/><path d="M1 9l4-4h10l-5 4z" fill="#c42e34"/><path d="M3 1l5 5 3-4" fill="none" stroke="#e5a32b" stroke-width="2"/></svg></button>
    <button aria-label="Draft analysis"><svg viewBox="0 0 16 16"><path d="M2 3l8-2 5 3-1 10-5-4-6 4z" fill="#5dbddd" stroke="#123"/><path d="M5 4l5 1-2 6-4-1z" fill="#f2eb58" stroke="#333"/></svg></button>
    <button aria-label="Curvature"><svg viewBox="0 0 16 16"><path d="M1 1h14v14H1z" fill="#fff5ae" stroke="#555"/><circle cx="6" cy="6" r="4" fill="#99b" stroke="#222"/><circle cx="10" cy="10" r="4" fill="none" stroke="#222"/><path d="M2 2l12 12" stroke="#222"/></svg></button>
    <button aria-label="Tap"><svg viewBox="0 0 16 16"><path d="M2 4l5-3 8 2-5 4z" fill="#18777d"/><path d="M2 5l8 2 5-3v4l-5 3-8-2z" fill="#ecd852" stroke="#555"/><path d="M2 9l8 2 5-3v4l-5 3-8-2z" fill="#197f79"/><path d="M3 7l9 2" stroke="#bd3634" stroke-width="2"/></svg></button>
  </div>
  <svg class="ds" viewBox="0 0 28 22"><path d="M7 1c5-1 5 3 1 5" fill="none" stroke="#df3440" stroke-width="1.500"/><path d="M4 7c7-2 8 6-1 8l3-7" fill="none" stroke="#243c84" stroke-width="1.500"/><path d="M18 6c-5-1-6 3-3 4s1 5-4 4" fill="none" stroke="#f29a2c" stroke-width="2"/><text x="5" y="21">CATIA</text></svg>
</div>

<footer class="status">
  <output>Edge/Pad.1/PartBody preselected</output>
  <label for="cmd">Radius,Setback</label><input id="cmd" value="12mm,10mm">
  <button aria-label="Command window"><svg viewBox="0 0 16 12"><path d="M3 1h8v8H3zM11 9h3v2h-3z" fill="none" stroke="#333"/><path d="M5 6h4" stroke="#333"/></svg></button>
  <button aria-label="Information"><svg viewBox="0 0 16 12"><circle cx="8" cy="5" r="4" fill="#ddd" stroke="#aaa"/><path d="M8 3v4M4 11l2-2" stroke="#999"/></svg></button>
</footer>

<div class="taskbar">
  <nav class="apps">
    <button aria-label="Windows"><svg viewBox="0 0 16 16"><path d="M2 4l5-1v4.500H2zM8 2.800L14 2v5.500H8zM2 8.500h5V13l-5-1zM8 8.500h6V14l-6-.8z" fill="#fff"/></svg></button>
    <button aria-label="Search"><svg viewBox="0 0 16 16"><circle cx="9.500" cy="6" r="4" fill="none" stroke="#fff" stroke-width="1.200"/><path d="M6.500 9L2 13.500" stroke="#fff" stroke-width="1.200"/></svg></button>
    <button aria-label="Task view"><svg viewBox="0 0 16 16"><path d="M3 2v3h6V2M3 14v-3h6v3M3 6h6v4H3zM12.500 2v12M11.500 7h2" fill="none" stroke="#fff"/></svg></button>
    <button aria-label="Edge"><svg viewBox="0 0 16 16"><path d="M14 9H5c0 5 5 5 8 3v3C6 17 1 14 3 8c1-3 3-4 5-4-4 0-6 2-7 4C1 3 4 1 8 1c5 0 7 4 6 8zM5 7h5c0-4-4-4-5 0z" fill="#1383dc"/></svg></button>
    <button class="run" aria-label="Explorer"><svg viewBox="0 0 16 16"><path d="M1 2h5l1 1h8v11H1z" fill="#f6d77e"/><path d="M3 8h10v6h-2v-3H5v3H3z" fill="#4daad7"/></svg></button>
    <button aria-label="Store"><svg viewBox="0 0 16 16"><path d="M5 4c0-4 6-4 6 0" fill="none" stroke="#fff"/><path d="M1 4h14v11H1z" fill="#fff"/><path d="M4 6h3v3H4z" fill="#e94f2d"/><path d="M8 6h3v3H8z" fill="#78b729"/><path d="M4 10h3v3H4z" fill="#239bd9"/><path d="M8 10h3v3H8z" fill="#f8b91c"/></svg></button>
    <button aria-label="Mail"><svg viewBox="0 0 16 16"><path d="M1 5l7-4 7 4v8H1z" fill="#fff"/><path d="M1 6l7 4 7-4" fill="none" stroke="#111"/></svg><span class="badge">74</span></button>
    <button aria-label="Snipping Tool"><svg viewBox="0 0 16 16"><ellipse cx="8" cy="5" rx="7" ry="4" fill="#e9d9dc" stroke="#ca4d56" transform="rotate(-15 8 5)"/><path d="M4 6l8 6M9 6l-1 7" stroke="#c44"/><circle cx="13" cy="12" r="2" fill="none" stroke="#689dcc"/><circle cx="9" cy="14" r="1.500" fill="none" stroke="#689dcc"/></svg></button>
    <button aria-label="Paint"><svg viewBox="0 0 16 16"><ellipse cx="7" cy="9" rx="6" ry="6" fill="#a9cce3"/><circle cx="4" cy="8" r="1.500" fill="#d64337"/><circle cx="8" cy="6" r="1.300" fill="#e8d334"/><circle cx="8" cy="12" r="2" fill="#3578ae"/><path d="M9 11l4-10 2 1-4 10z" fill="#e9b46c"/></svg></button>
    <button aria-label="Photo editor"><svg viewBox="0 0 16 16"><path d="M1 6c5-6 12-2 14 7-4-6-7-7-11-4L1 15z" fill="#bf6241"/><path d="M4 2c6 0 10 5 10 12L10 7z" fill="#8cc2df"/><path d="M8 6L2 14" stroke="#eee"/></svg></button>
    <button aria-label="Hangul"><svg class="han"><use href="#han"/></svg></button>
    <button class="run" aria-label="Coccoc"><svg viewBox="0 0 16 16"><circle cx="7.500" cy="8.500" r="7" fill="#70b544"/><circle cx="7.500" cy="8.500" r="4" fill="none" stroke="#fff" stroke-width="2"/><path d="M9 7l2-6 1 4 4-3-3 6z" fill="#fff3ba" stroke="#d16b38" stroke-width=".6"/></svg></button>
    <button class="run" aria-label="Sticky Notes"><svg viewBox="0 0 16 16"><path d="M2 2h13v13H2z" fill="#ffe021"/><path d="M8 15l1-5h6l-5 5z" fill="#222"/></svg></button>
    <button class="run active" aria-label="CATIA"><svg><use href="#catia"/></svg></button>
    <button class="run" aria-label="Excel"><svg viewBox="0 0 16 16"><path d="M8 2h7v12H8z" fill="#f3fff6" stroke="#27784c"/><path d="M8 5h7M8 8h7M8 11h7M12 2v12" stroke="#27784c"/><path d="M1 2l9-1v14l-9-1z" fill="#176c3c"/><path d="M3 5l5 6M8 5l-5 6" stroke="#fff" stroke-width="1.500"/></svg></button>
    <button class="run" aria-label="Hangul document"><svg class="han"><use href="#han"/></svg></button>
    <button class="run" aria-label="WhatsApp"><svg viewBox="0 0 16 16"><path d="M1 15l1-4C-1 5 3 1 8 1c9 0 9 14 0 14l-3-1z" fill="#eafff0"/><circle cx="8" cy="8" r="6" fill="#31b953"/><path d="M5 5c0 4 3 6 6 6l1-2-2-1-1 1-2-2 1-1-1-2z" fill="#fff"/></svg></button>
    <button class="run" aria-label="Skype"><svg viewBox="0 0 16 16"><circle cx="5" cy="5" r="4.500" fill="#159bdd"/><circle cx="11" cy="11" r="4.500" fill="#159bdd"/><circle cx="8" cy="8" r="6.500" fill="#159bdd"/><path d="M11 5C8 3 5 4 5 6c0 3 6 1 6 4 0 2-4 2.500-6 .5" fill="none" stroke="#fff" stroke-width="1.700"/></svg></button>
    <button class="run" aria-label="Camtasia"><svg viewBox="0 0 16 16"><rect x="0" y="0" width="16" height="16" rx="1" fill="#ef4037"/><path d="M12 6V4H5v8h7v-2" fill="none" stroke="#fff" stroke-width="2.500"/></svg></button>
  </nav>
  <p class="banner">#tuanlv, #VIMECH CO.,LTD</p>
  <time class="clock">1:32 PM<br>5/13/2019</time>
</div>
</div>
</body>
</html>
```

FILE: styles.css
```css
* { box-sizing: border-box; }
html, body { height: 100%; }
body { margin: 0; overflow: hidden; font: 9px/12px Lato, "Open Sans", sans-serif; color: #222; }
button, input, select, textarea { font: inherit; color: inherit; margin: 0; padding: 0; border: 0; border-radius: 0; background: none; }
button { display: flex; align-items: center; justify-content: center; }
h1, h2, p, ul { margin: 0; padding: 0; font: inherit; list-style: none; }
i { font-style: normal; flex: none; }
.defs { position: absolute; width: 0; height: 0; }
.app { display: flex; flex-direction: column; height: 100vh; }

.titlebar { display: flex; align-items: center; height: 15px; background: #fff; padding-left: 2px; }
.titlebar h1 { margin-left: 4px; flex: 1; font-family: "Open Sans", sans-serif; }
.logo { width: 9px; height: 9px; }
.winctl { display: flex; gap: 20px; padding-right: 12px; }
.winctl svg { width: 10px; height: 10px; }
.menubar { display: flex; align-items: stretch; height: 13px; background: #cccae8; }
.menubar .logo { width: 12px; height: 11px; margin-right: 2px; }
.menubar > button { padding: 0 8px; }
.menubar .on { background: #fce2c4; padding: 0 8px 0 4px; }
.docctl { display: flex; margin-left: auto; gap: 2px; }
.docctl button { width: 11px; background: #fff; }
.docctl svg { width: 10px; height: 10px; }

.bar { display: flex; align-items: center; background: linear-gradient(#fff 0 2px, #dddcef 3px, #c9c7e4 70%, #a9a8c6); flex: none; }
.top { height: 26px; border-bottom: 2px solid #77758e; }
.bottom { height: 26px; padding-top: 3px; border-bottom: 2px solid #9c9bb0; }
.set { display: flex; gap: 1px; align-items: center; }
.set button, .side button { position: relative; width: 18px; height: 18px; flex: none; }
.set svg, .side button svg { width: 15px; height: 15px; }
.set .sep { width: 11px; height: 12px; margin-bottom: 6px; background: linear-gradient(90deg, transparent 6px, #fff 6px 8px, #aaa8c3 8px 9px, transparent 9px); }
.set .rule { width: 5px; height: 23px; background: linear-gradient(90deg, transparent 2px, #f3f2fa 2px 4px, transparent 4px); }
.blank { width: 7px; }
.right { margin-left: auto; padding-right: 122px; }
.right .sep { width: 13px; }
.lead { width: 12px; }
.lead .sep { background: linear-gradient(90deg, transparent 4px, #fff 4px 6px, transparent 6px); }
.dd::after { content: ""; position: absolute; right: -2px; bottom: -1px; border: 2px solid transparent; border-top: 3px solid #111; border-bottom: 0; }
.combos { display: flex; gap: 2px; }
.sel { position: relative; display: flex; height: 16px; border: 1px solid #9a9aa8; background: #fff; }
.sel select { appearance: none; width: 100%; padding: 0 11px 0 2px; overflow: hidden; outline: none; opacity: 1; text-overflow: clip; }
.sel svg { position: absolute; right: 2px; top: 4px; width: 8px; height: 8px; pointer-events: none; }
.combos .sel { font-family: "Open Sans", sans-serif; }
.w42 { width: 43px; }
.w28 { width: 28px; }
.gray { background: #dedee2; }
.off { color: #999; border-color: #c5c4d8; background: #ececf4; }
.fx { font: italic 14px/16px "Liberation Serif", serif; }
.fx small { font-size: 9px; }
.nums { font: 8px/8px "Liberation Sans", sans-serif; }
.body { width: 110px; background: #dddde8; border-color: #bdbccd; }
.ds { width: 30px; height: 22px; margin-left: auto; margin-right: 3px; }
.ds text { font: italic bold 7px "Liberation Sans", sans-serif; fill: #263c83; }

.work { display: flex; flex: 1; min-height: 0; }
.viewport { position: relative; flex: 1; border-left: 1px solid #999; background: linear-gradient(#353263, #3b3869 25%, #434075 50%, #4b487b 68%, #727099 81%, #aaa8c6); }
.scene { position: absolute; inset: 0; width: 100%; height: 100%; }
.dim { font: 10px "Open Sans", sans-serif; fill: #31c052; }
.axis { font: 10px "Open Sans", sans-serif; fill: #e0d36c; }
.pale { fill: #dad8ec; }

.tree { position: absolute; left: 0; top: 7px; display: grid; grid-auto-rows: 1fr; height: 164px; color: #eeeefa; font: 11px/16px "Open Sans", sans-serif; }
.tree::before { content: ""; position: absolute; left: 6px; top: 20px; bottom: 12px; width: 2px; background: #c4c3dc; }
.tree li { position: relative; display: flex; align-items: center; gap: 3px; }
.tree svg { width: 19px; height: 19px; }
.tree .root { gap: 4px; }
.tree .leaf { padding-left: 17px; }
.tree .leaf::before { content: ""; position: absolute; left: 8px; top: 11px; width: 10px; height: 2px; background: #c4c3dc; }
.tree .sub { padding-left: 34px; }
.tree .sub::before { left: 24px; }
.tree .sub::after { content: ""; position: absolute; left: 23px; top: -5px; width: 2px; height: 16px; background: #c4c3dc; }
.ball { position: absolute; z-index: 1; left: 2px; width: 10px; height: 10px; border-radius: 50%; background: #8e8e98; color: #000; font: bold 12px/10px "Liberation Sans", sans-serif; text-align: center; }
.sub .ball { left: 19px; }
.tree .picked { background: #f98013; }

.dialog { position: absolute; right: 11px; bottom: 11px; width: 463px; background: linear-gradient(#f0dcc7, #fde4c0 45%, #ffe6be); box-shadow: 0 0 0 1px #8d8991; display: flex; flex-direction: column; }
.dtitle { display: flex; height: 21px; padding: 0 10px 0 5px; background: #fff; align-items: center; color: #777; }
.dtitle h2 { flex: 1; }
.dtitle button { width: 10px; margin-left: 20px; font-size: 10px; }
.dtitle svg { width: 8px; height: 8px; }
.dbody { display: grid; grid-template-columns: 248px minmax(0, 1fr); gap: 1px; padding: 6px 7px 0; }
.row { display: flex; align-items: center; }
.r14 { height: 14px; } .r15 { height: 15px; } .r18 { height: 18px; } .r22 { height: 22px; }
.g2 { margin-top: 2px; } .g3 { margin-top: 3px; } .g4 { margin-top: 4px; }
.dleft label { width: 100px; flex: none; }
.check { display: flex; align-items: center; gap: 3px; white-space: nowrap; }
.check input { appearance: none; width: 8px; height: 8px; border: 1px solid #4d4a42; background: #fffbe0; }
.field, .spin, textarea { border: 1px solid #a9a6a0; border-top-color: #77746f; border-left-color: #77746f; background: #fff; height: 14px; padding: 0 2px; outline: none; min-width: 0; }
.dleft .field { width: 99px; }
.dleft .picked-field { padding: 0 1px; background: #1479d5; color: #fff; }
.mini { width: 14px; height: 14px; flex: none; background: #dad8ea; border: 1px solid #fff; border-right-color: #888; border-bottom-color: #888; }
.mini svg { width: 11px; height: 11px; }
.spin { display: flex; padding: 0 0 0 2px; }
.spin input { flex: 1; width: 0; outline: none; }
.ud { display: flex; flex-direction: column; width: 11px; border-left: 1px solid #888; }
.ud button { flex: 1; width: 100%; font: 5px/5px "DejaVu Sans", sans-serif; overflow: hidden; background: #e9e9ec; min-height: 0; }
.ud button + button { border-top: 1px solid #777; }
.w89 { width: 90px; } .w125 { width: 125px; } .w104 { width: 104px; } .w98 { width: 98px; } .w115 { width: 115px; }
.modes { display: flex; margin-left: 3px; }
.tool { width: 18px; height: 18px; border: 1px solid #fff; border-right-color: #8f8a84; border-bottom-color: #8f8a84; background: #f2e6da; flex: none; }
.tool.down { border-color: #8f8a84 #fff #fff #8f8a84; background: #f6f0ea; }
.tool svg { width: 14px; height: 14px; }
.faded { background: #dfd6ca; }
.faded svg { filter: grayscale(1); opacity: .6; }
.sel.wide { width: 129px; height: 100%; background: #e2dedb; border-color: #b8b4b0; }
.sel.dark { background: #c9c6c3; border-color: #c9c6c3; }
.dleft .sel svg { top: 3px; }
.after { margin-left: 2px; }
.dim-row, .nosharp { color: #8b8681; }
.dis { color: #777; background: #efeeed; }
.divider { display: flex; align-items: center; height: 12px; width: 228px; gap: 3px; margin-top: 1px; }
.divider::before, .divider::after { content: ""; height: 1px; background: #c9c1b9; }
.divider::before { width: 61px; }
.divider::after { flex: 1; }
.divider.first { margin-top: 17px; }
.end { justify-content: flex-end; }
.push { height: 14px; width: 47px; flex: none; border: 1px solid #f8f7ff; border-right-color: #77748e; border-bottom-color: #77748e; background: #d2d0ea; box-shadow: 0 0 0 1px #b8b4b4; }
.less { width: 34px; margin-right: 1px; }
.dots { width: 14px; height: 13px; }
.dright { display: flex; flex-direction: column; gap: 2px; }
.box { border: 1px solid #c6bdb5; padding: 1px 0; white-space: nowrap; }
.box.tight { padding: 0; }
.push-right { margin-left: auto; }
.box .mini { margin-right: 15px; }
.flush { margin-right: 15px; }
.box textarea { width: 125px; height: 22px; resize: none; overflow: hidden; margin-right: 3px; line-height: 10px; }
.gap20 { margin-right: 19px; }
.dright .nosharp { margin-top: 1px; padding-left: 1px; }
.dfoot { position: relative; display: flex; justify-content: flex-end; gap: 5px; padding: 6px 6px 0; height: 25px; }
.dfoot .push { position: relative; }
.dfoot .push span { flex: 1; text-align: center; }
.led { width: 8px; height: 8px; border-radius: 50%; margin-left: 3px; }
.green { background: radial-gradient(circle at 35% 30%, #9f9, #19a22b 50%, #096315); }
.red { background: radial-gradient(circle at 35% 30%, #fbb, #d8232a 50%, #8b0f12); }
.glow { position: absolute; left: 0; bottom: 0; width: 40px; height: 28px; }

.side { width: 25px; flex: none; display: flex; flex-direction: column; align-items: center; gap: 1px; background: linear-gradient(90deg, #fff 2px, #dcdaef 4px, #c8c6e4 75%, #a3a1bf); overflow: hidden; }
.side .sep { width: 12px; height: 11px; margin-right: 6px; background: linear-gradient(transparent 4px, #fff 4px 6px, #b1afca 6px 7px, transparent 7px); }
.side .sep.tall { height: 16px; background: linear-gradient(transparent 8px, #fff 8px 10px, #b1afca 10px 11px, transparent 11px); }
.side .sep:first-child { height: 6px; background: linear-gradient(transparent 3px, #fff 3px 5px, transparent 5px); }

.status { display: flex; align-items: center; height: 15px; background: #cdcbe7; padding-left: 2px; flex: none; }
.status output { flex: 1; }
.status input { width: 200px; height: 12px; background: #fff; margin-left: 3px; padding-left: 2px; }
.status button { width: 20px; height: 13px; margin-left: 2px; border: 1px solid #eee; }
.status svg { width: 14px; height: 10px; }
.taskbar { position: relative; display: flex; justify-content: space-between; height: 27px; background: #060b14; color: #fff; flex: none; }
.apps { display: grid; grid-template-columns: repeat(19, 1fr); width: 48%; }
.apps button { position: relative; border-bottom: 2px solid transparent; }
.apps .run { border-image: linear-gradient(90deg, transparent 3px, #76b9ed 3px calc(100% - 3px), transparent calc(100% - 3px)) 2; }
.apps .active { background: #3a3e45; }
.apps svg { width: 16px; height: 16px; }
.han { font: bold 10px "Noto Sans CJK KR", sans-serif; fill: #fff; }
.badge { position: absolute; right: 1px; bottom: 2px; width: 13px; height: 13px; border-radius: 50%; background: #333a43; border: 1px solid #999; font-size: 8px; line-height: 11px; }
.clock { padding-right: 3px; text-align: center; line-height: 13px; white-space: nowrap; }
.banner { position: absolute; right: 128px; top: -5px; padding: 0 5px; border-radius: 3px; background: rgba(8, 8, 10, .93); color: #f3141d; font: italic bold 17px/29px "Liberation Sans", sans-serif; white-space: nowrap; }
```
